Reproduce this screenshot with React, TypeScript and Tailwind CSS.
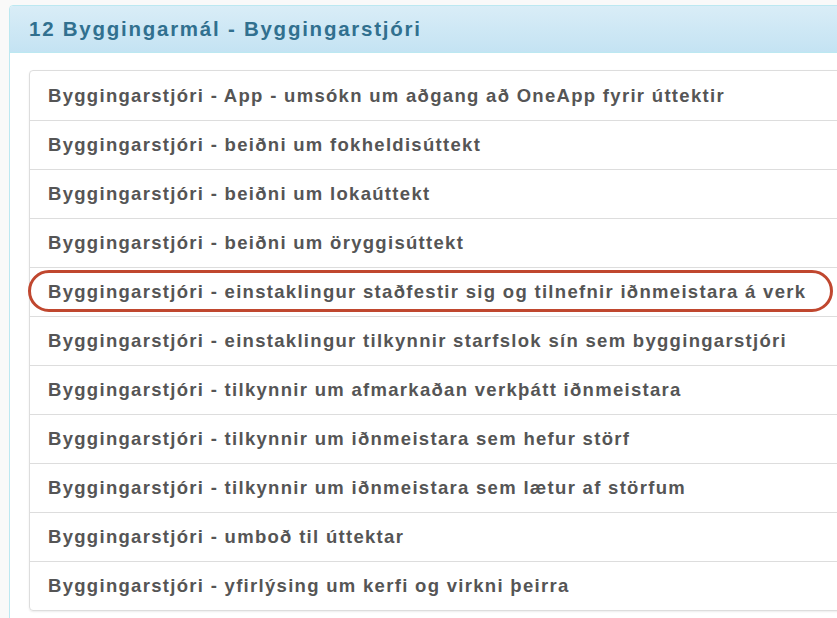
const items = [
  "Byggingarstjóri - App - umsókn um aðgang að OneApp fyrir úttektir",
  "Byggingarstjóri - beiðni um fokheldisúttekt",
  "Byggingarstjóri - beiðni um lokaúttekt",
  "Byggingarstjóri - beiðni um öryggisúttekt",
  "Byggingarstjóri - einstaklingur staðfestir sig og tilnefnir iðnmeistara á verk",
  "Byggingarstjóri - einstaklingur tilkynnir starfslok sín sem byggingarstjóri",
  "Byggingarstjóri - tilkynnir um afmarkaðan verkþátt iðnmeistara",
  "Byggingarstjóri - tilkynnir um iðnmeistara sem hefur störf",
  "Byggingarstjóri - tilkynnir um iðnmeistara sem lætur af störfum",
  "Byggingarstjóri - umboð til úttektar",
  "Byggingarstjóri - yfirlýsing um kerfi og virkni þeirra",
];

export default function App() {
  return (
    <div className="w-[837px] h-[618px] overflow-hidden bg-[#f9f9f9] pt-[5px] pl-[9px] font-['Liberation_Sans',Arial,sans-serif]">
      <div className="w-[860px] border border-[#bce8f1] rounded-[4px] bg-white">
        <div className="h-[47px] flex items-center pl-[19px] bg-gradient-to-b from-[#d9edf7] to-[#c4e3f3] border-b border-[#bce8f1] rounded-t-[3px]">
          <h3 className="text-[20.5px] font-bold text-[#31708f] tracking-[1.75px]">12 Byggingarmál - Byggingarstjóri</h3>
        </div>
        <div className="pt-[17px] pl-[19px] pb-[12px]">
          <ul className="border border-[#dddddd] rounded-[4px] shadow-[0_1px_2px_rgba(0,0,0,0.08)]">
            {items.map((t, i) => (
              <li
                key={t}
                className={`relative h-[49px] flex items-center pl-[18px] text-[18.5px] font-bold text-[#555555] tracking-[1.3px] ${i > 0 ? "border-t border-[#dddddd]" : ""}`}
              >
                {t}
                {i === 4 && (
                  <span className="absolute left-[-2px] top-[2px] w-[805px] h-[42px] rounded-full border-[3px] border-[#c0472f]" />
                )}
              </li>
            ))}
          </ul>
        </div>
      </div>
    </div>
  );
}
